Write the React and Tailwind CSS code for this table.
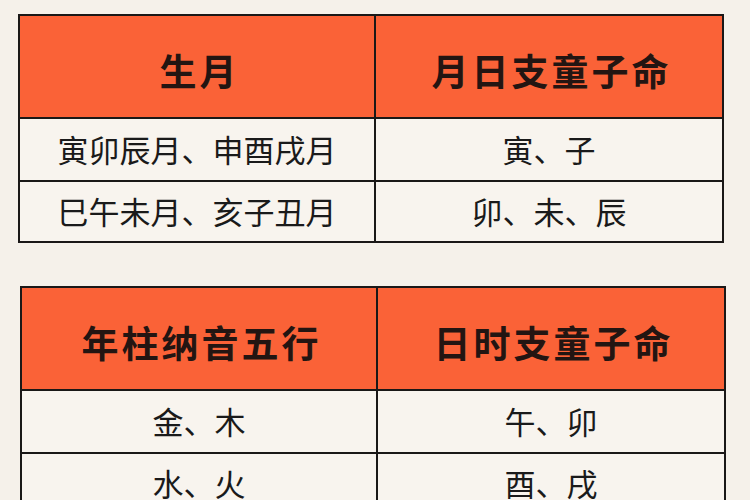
import React from 'react';

const tables = [
  {
    head: ['生月', '月日支童子命'],
    rows: [
      ['寅卯辰月、申酉戌月', '寅、子'],
      ['巳午未月、亥子丑月', '卯、未、辰'],
    ],
    wrap: 'ml-[18px] w-[706px]',
  },
  {
    head: ['年柱纳音五行', '日时支童子命'],
    rows: [
      ['金、木', '午、卯'],
      ['水、火', '酉、戌'],
    ],
    wrap: 'ml-[20px] w-[706px]',
  },
];

const Table = ({ head, rows, wrap }) => (
  <div className={`${wrap} border-2 border-[#1a1817] grid grid-cols-[356px_1fr]`}>
    {head.map((h, i) => (
      <div
        key={h}
        className={`h-[101px] bg-[#fa6237] flex items-center justify-center pt-2 pl-[5px] text-[37px] font-bold text-[#231512] tracking-[3px] ${i === 0 ? 'border-r-2 border-[#1a1817]' : ''}`}
      >
        {h}
      </div>
    ))}
    {rows.map((r, ri) =>
      r.map((c, ci) => (
        <div
          key={ri + '-' + ci}
          className={`${ri === 0 ? 'h-[63px]' : 'h-[61px]'} border-t-2 border-[#1a1817] bg-[#f8f4ee] flex items-center justify-center text-[31px] text-[#1a1a1a] ${ci === 0 ? 'border-r-2' : ''}`}
        >
          {c}
        </div>
      ))
    )}
  </div>
);

export default function App() {
  return (
    <div
      className="w-[750px] h-[500px] overflow-hidden bg-[#f5f1ea] pt-[14px]"
      style={{ fontFamily: '"Noto Sans CJK SC", "Noto Sans", sans-serif' }}
    >
      <Table {...tables[0]} />
      <div className="h-[43px]" />
      <Table {...tables[1]} />
    </div>
  );
}
